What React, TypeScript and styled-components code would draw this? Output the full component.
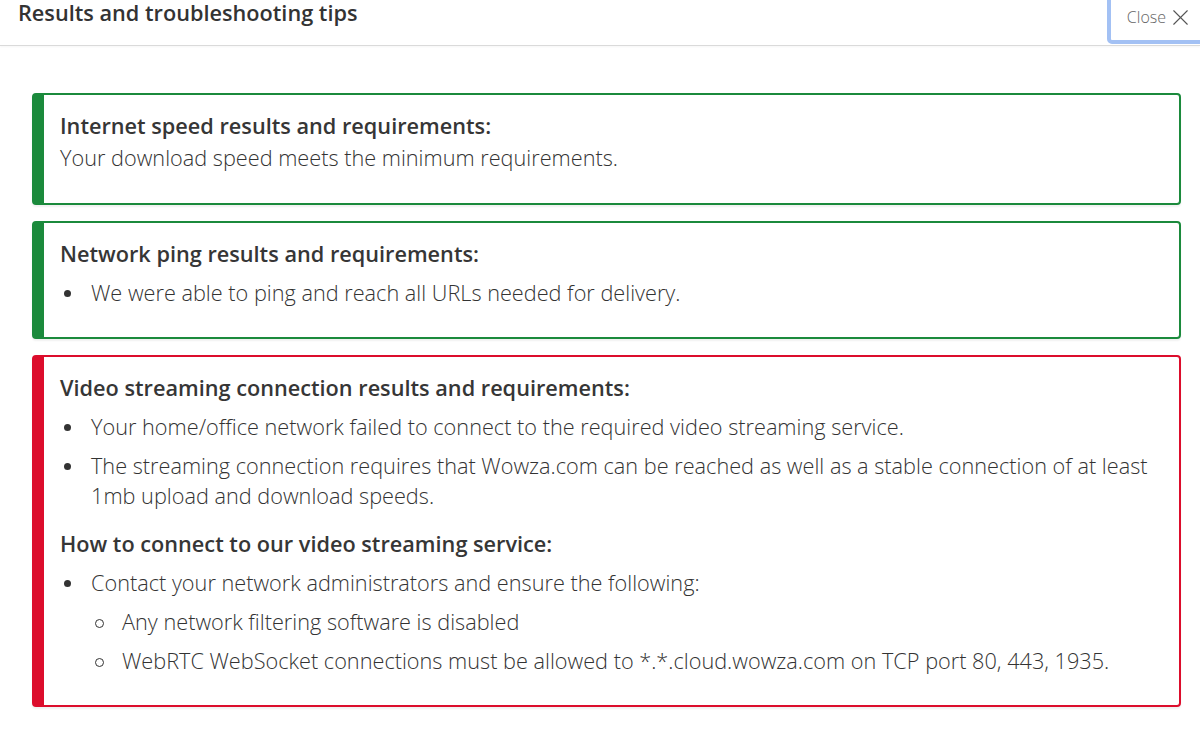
import React from 'react'
import styled, { createGlobalStyle, css } from 'styled-components'
import { X } from 'lucide-react'

const GlobalStyle = createGlobalStyle`
  html, body {
    margin: 0;
    padding: 0;
    background: #fff;
    font-family: "Open Sans", "Noto Sans", Arial, sans-serif;
    color: #444;
  }
  * { box-sizing: border-box; }
`

const Page = styled.div`
  width: 1200px;
  height: 737px;
  overflow: hidden;
  background: #fff;
`

const Header = styled.header`
  display: flex;
  justify-content: space-between;
  align-items: stretch;
  height: 46px;
  border-bottom: 1px solid #dadada;
  box-shadow: 0 1px 2px rgba(0, 0, 0, 0.04);
`

const Title = styled.h1`
  margin: 0;
  padding: 1px 0 0 18px;
  font-size: 21.7px;
  line-height: 24px;
  font-weight: 600;
  color: #333;
`

const CloseButton = styled.button`
  display: flex;
  align-items: center;
  gap: 1px;
  margin: -10px -24px 1px 0;
  padding: 0 26px 0 16px;
  border: 4px solid #a3c1f4;
  border-radius: 0 0 0 5px;
  background: #fff;
  font-family: inherit;
  font-size: 16px;
  font-weight: 300;
  color: #666;
  cursor: pointer;
`

const Content = styled.main`
  display: flex;
  flex-direction: column;
  gap: 16px;
  padding: 47px 19px 0 32px;
`

const Card = styled.section<{ $status: 'ok' | 'fail' }>`
  border: 2px solid;
  border-left-width: 12px;
  border-radius: 4px;
  padding: 16px 24px 29px 16px;
  box-shadow: 0 2px 2px rgba(0, 0, 0, 0.06);
  ${({ $status }) =>
    $status === 'ok'
      ? css`border-color: #1b8a3c;`
      : css`border-color: #dc0d2c;`}
`

const CardTitle = styled.h2<{ $spaced?: boolean }>`
  margin: ${({ $spaced }) => ($spaced ? '18px 0 0' : '0')};
  font-size: 21.7px;
  line-height: 30px;
  font-weight: 600;
  color: #363636;
`

const Body = styled.p`
  margin: 2px 0 1px;
  font-size: 21.7px;
  line-height: 30px;
  font-weight: 300;
  color: #333;
`

const List = styled.ul`
  list-style: none;
  margin: 9px 0 0;
  padding: 0 0 0 31px;
  display: flex;
  flex-direction: column;
  gap: 9px;
`

const Item = styled.li<{ $sub?: boolean }>`
  position: relative;
  font-size: 21.7px;
  line-height: 30px;
  font-weight: 300;
  color: #333;

  &::before {
    content: '';
    position: absolute;
    top: 12px;
    left: -27px;
    width: 7px;
    height: 7px;
    border-radius: 50%;
    ${({ $sub }) =>
      $sub
        ? css`
            border: 1.6px solid #333;
            background: transparent;
          `
        : css`
            background: #333;
          `}
  }
`

export default function App() {
  return (
    <Page>
      <GlobalStyle />
      <Header>
        <Title>Results and troubleshooting tips</Title>
        <CloseButton>
          Close <X size={27} strokeWidth={1} color="#555" />
        </CloseButton>
      </Header>
      <Content>
        <Card $status="ok">
          <CardTitle>Internet speed results and requirements:</CardTitle>
          <Body>Your download speed meets the minimum requirements.</Body>
        </Card>
        <Card $status="ok">
          <CardTitle>Network ping results and requirements:</CardTitle>
          <List>
            <Item>We were able to ping and reach all URLs needed for delivery.</Item>
          </List>
        </Card>
        <Card $status="fail">
          <CardTitle>Video streaming connection results and requirements:</CardTitle>
          <List>
            <Item>Your home/office network failed to connect to the required video streaming service.</Item>
            <Item>
              The streaming connection requires that Wowza.com can be reached as well as a stable connection of at least
              1mb upload and download speeds.
            </Item>
          </List>
          <CardTitle $spaced>How to connect to our video streaming service:</CardTitle>
          <List>
            <Item>
              Contact your network administrators and ensure the following:
              <List>
                <Item $sub>Any network filtering software is disabled</Item>
                <Item $sub>WebRTC WebSocket connections must be allowed to *.*.cloud.wowza.com on TCP port 80, 443, 1935.</Item>
              </List>
            </Item>
          </List>
        </Card>
      </Content>
    </Page>
  )
}
